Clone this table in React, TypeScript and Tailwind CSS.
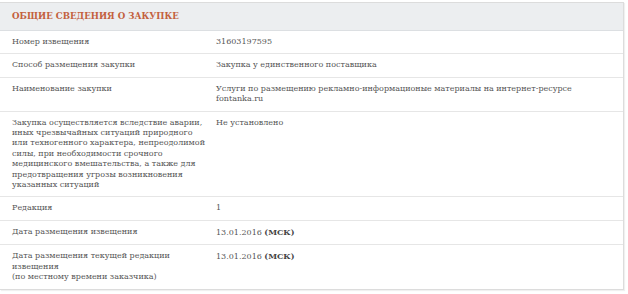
const rows: { label: string[]; value: React.ReactNode }[] = [
  { label: ["Номер извещения"], value: "31603197595" },
  { label: ["Способ размещения закупки"], value: "Закупка у единственного поставщика" },
  {
    label: ["Наименование закупки"],
    value: "Услуги по размещению рекламно-информационые материалы на интернет-ресурсе fontanka.ru",
  },
  {
    label: [
      "Закупка осуществляется вследствие аварии, иных чрезвычайных ситуаций природного или техногенного характера, непреодолимой силы, при необходимости срочного медицинского вмешательства, а также для предотвращения угрозы возникновения указанных ситуаций",
    ],
    value: "Не установлено",
  },
  { label: ["Редакция"], value: "1" },
  {
    label: ["Дата размещения извещения"],
    value: (
      <>
        13.01.2016 <b className="font-bold text-[#444]">(МСК)</b>
      </>
    ),
  },
  {
    label: ["Дата размещения текущей редакции извещения", "(по местному времени заказчика)"],
    value: (
      <>
        13.01.2016 <b className="font-bold text-[#444]">(МСК)</b>
      </>
    ),
  },
];

export default function App() {
  return (
    <div className="h-[294px] w-[628px] bg-white pt-[2px] font-['DejaVu_Serif',serif]">
      <div className="w-[624px] border border-l-0 border-[#dcdcdc] bg-white shadow-[1px_1px_1px_rgba(0,0,0,0.06)]">
        <div className="flex h-[28px] items-center border-b border-[#dcdfe2] bg-[#eceef0] pl-3">
          <h2 className="font-['DejaVu_Serif_Condensed','DejaVu_Serif',serif] text-[9.6px] font-bold [font-stretch:condensed] text-[#c3603d]">
            ОБЩИЕ СВЕДЕНИЯ О ЗАКУПКЕ
          </h2>
        </div>
        {rows.map((row, i) => (
          <div
            key={i}
            className={`grid grid-cols-[204px_1fr] py-[6px] pl-3 text-[8px] leading-[10.4px] text-[#555] ${
              i < rows.length - 1 ? "border-b border-[#e6e6e6]" : ""
            }`}
          >
            <div className="pr-2">
              {row.label.map((l, j) => (
                <div key={j}>{l}</div>
              ))}
            </div>
            <div className="w-[365px]">{row.value}</div>
          </div>
        ))}
      </div>
    </div>
  );
}
